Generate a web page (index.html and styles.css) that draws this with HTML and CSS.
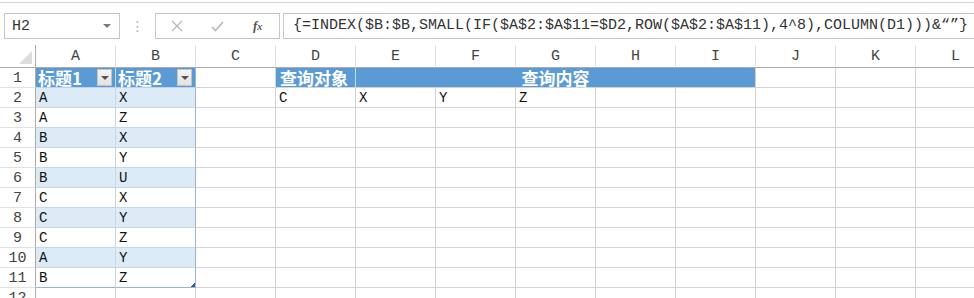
FILE: index.html
```html
<!DOCTYPE html>
<html lang="zh">
<head>
<meta charset="utf-8">
<title>Sheet</title>
<link rel="stylesheet" href="styles.css">
</head>
<body>
<div class="topline"></div>
<div class="bar">
  <div class="namebox"><span class="ref">H2</span><span class="dd"></span></div>
  <div class="grip">⋮</div>
  <div class="btns">
    <svg class="ic" width="12" height="12" viewBox="0 0 12 12"><path d="M1 1L11 11M11 1L1 11" stroke="#b8b8b8" stroke-width="1.3" fill="none"/></svg>
    <svg class="ic" width="13" height="11" viewBox="0 0 13 11"><path d="M1 6L4.5 9.5L12 1" stroke="#b8b8b8" stroke-width="1.6" fill="none"/></svg>
    <span class="fx">f<small>x</small></span>
  </div>
  <div class="formula">{=INDEX($B:$B,SMALL(IF($A$2:$A$11=$D2,ROW($A$2:$A$11),4^8),COLUMN(D1)))&amp;“”}</div>
</div>
<div class="sheet">
  <div class="corner"><span class="tri"></span></div>
  <div class="h">A</div><div class="h">B</div><div class="h">C</div><div class="h">D</div><div class="h">E</div><div class="h">F</div><div class="h">G</div><div class="h">H</div><div class="h">I</div><div class="h">J</div><div class="h">K</div><div class="h">L</div>

  <div class="n">1</div><div class="c th"><span class="lbl">标题1</span><span class="fb"></span></div><div class="c th tr"><span class="lbl">标题2</span><span class="fb"></span></div><div class="c"></div><div class="c hd hdD">查询对象</div><div class="c hd merge">查询内容</div><div class="c"></div><div class="c"></div><div class="c"></div>

  <div class="n">2</div><div class="c t b">A</div><div class="c t b tr">X</div><div class="c"></div><div class="c">C</div><div class="c">X</div><div class="c">Y</div><div class="c">Z</div><div class="c"></div><div class="c"></div><div class="c"></div><div class="c"></div><div class="c"></div>

  <div class="n">3</div><div class="c t">A</div><div class="c t tr">Z</div><div class="c"></div><div class="c"></div><div class="c"></div><div class="c"></div><div class="c"></div><div class="c"></div><div class="c"></div><div class="c"></div><div class="c"></div><div class="c"></div>

  <div class="n">4</div><div class="c t b">B</div><div class="c t b tr">X</div><div class="c"></div><div class="c"></div><div class="c"></div><div class="c"></div><div class="c"></div><div class="c"></div><div class="c"></div><div class="c"></div><div class="c"></div><div class="c"></div>

  <div class="n">5</div><div class="c t">B</div><div class="c t tr">Y</div><div class="c"></div><div class="c"></div><div class="c"></div><div class="c"></div><div class="c"></div><div class="c"></div><div class="c"></div><div class="c"></div><div class="c"></div><div class="c"></div>

  <div class="n">6</div><div class="c t b">B</div><div class="c t b tr">U</div><div class="c"></div><div class="c"></div><div class="c"></div><div class="c"></div><div class="c"></div><div class="c"></div><div class="c"></div><div class="c"></div><div class="c"></div><div class="c"></div>

  <div class="n">7</div><div class="c t">C</div><div class="c t tr">X</div><div class="c"></div><div class="c"></div><div class="c"></div><div class="c"></div><div class="c"></div><div class="c"></div><div class="c"></div><div class="c"></div><div class="c"></div><div class="c"></div>

  <div class="n">8</div><div class="c t b">C</div><div class="c t b tr">Y</div><div class="c"></div><div class="c"></div><div class="c"></div><div class="c"></div><div class="c"></div><div class="c"></div><div class="c"></div><div class="c"></div><div class="c"></div><div class="c"></div>

  <div class="n">9</div><div class="c t">C</div><div class="c t tr">Z</div><div class="c"></div><div class="c"></div><div class="c"></div><div class="c"></div><div class="c"></div><div class="c"></div><div class="c"></div><div class="c"></div><div class="c"></div><div class="c"></div>

  <div class="n">10</div><div class="c t b">A</div><div class="c t b tr">Y</div><div class="c"></div><div class="c"></div><div class="c"></div><div class="c"></div><div class="c"></div><div class="c"></div><div class="c"></div><div class="c"></div><div class="c"></div><div class="c"></div>

  <div class="n">11</div><div class="c t tl">B</div><div class="c t tr tl corner-handle">Z</div><div class="c"></div><div class="c"></div><div class="c"></div><div class="c"></div><div class="c"></div><div class="c"></div><div class="c"></div><div class="c"></div><div class="c"></div><div class="c"></div>

  <div class="n">12</div><div class="c"></div><div class="c"></div><div class="c"></div><div class="c"></div><div class="c"></div><div class="c"></div><div class="c"></div><div class="c"></div><div class="c"></div><div class="c"></div><div class="c"></div><div class="c"></div>
</div>
</body>
</html>
```
FILE: styles.css
```css
html, body {
  margin: 0;
  padding: 0;
  background: #fff;
  overflow: hidden;
}
body {
  width: 974px;
  height: 298px;
  font-family: "Liberation Mono", "Noto Sans CJK SC", monospace;
  color: #222;
}
.topline {
  height: 2px;
  border-bottom: 1px solid #d6d6d6;
}
.bar {
  display: flex;
  align-items: center;
  height: 26px;
  padding: 10px 0 0 4px;
}
.namebox {
  box-sizing: border-box;
  width: 116px;
  height: 26px;
  border: 1px solid #c6c6c6;
  display: flex;
  align-items: center;
  justify-content: space-between;
  padding: 0 8px 0 7px;
  font-size: 15px;
  color: #333;
}
.dd {
  width: 0;
  height: 0;
  border-left: 4px solid transparent;
  border-right: 4px solid transparent;
  border-top: 4px solid #7a7a7a;
}
.grip {
  width: 35px;
  text-align: center;
  color: #b0b0b0;
  font-family: "DejaVu Sans", sans-serif;
  font-size: 14px;
}
.btns {
  box-sizing: border-box;
  width: 125px;
  height: 26px;
  border: 1px solid #c6c6c6;
  display: flex;
  align-items: center;
  padding: 0 0 0 15px;
}
.btns .ic:first-child { margin-right: 28px; }
.btns .ic:nth-child(2) { margin-right: 29px; }
.fx {
  font-family: "Liberation Serif", serif;
  font-style: italic;
  font-weight: bold;
  font-size: 13px;
  color: #555;
}
.fx small { font-size: 10px; }
.formula {
  box-sizing: border-box;
  flex: 1;
  height: 26px;
  margin-left: 3px;
  margin-right: -2px;
  border: 1px solid #c6c6c6;
  padding-left: 9px;
  font-size: 15px;
  line-height: 24px;
  color: #333;
  white-space: nowrap;
  overflow: hidden;
}
.sheet {
  margin-top: 6px;
  display: grid;
  grid-template-columns: 36px repeat(12, 80px);
  grid-template-rows: 23px repeat(12, 20px);
  width: 996px;
}
.sheet > div {
  box-sizing: border-box;
  white-space: nowrap;
  overflow: hidden;
}
.corner {
  border-right: 1px solid #ababab;
  border-bottom: 1px solid #ababab;
  display: flex;
  justify-content: flex-end;
  align-items: flex-end;
  padding: 0 3px 3px 0;
}
.tri {
  width: 0;
  height: 0;
  border-left: 13px solid transparent;
  border-bottom: 13px solid #dcdcdc;
}
.h {
  border-right: 1px solid #e1e1e1;
  border-bottom: 1px solid #ababab;
  text-align: center;
  font-size: 15px;
  line-height: 24px;
  color: #444;
}
.n {
  border-right: 1px solid #ababab;
  border-bottom: 1px solid #e1e1e1;
  text-align: center;
  font-size: 15px;
  line-height: 21px;
  color: #444;
}
.c {
  border-right: 1px solid #d4d4d4;
  border-bottom: 1px solid #d4d4d4;
  font-size: 14px;
  line-height: 21px;
  padding-left: 3px;
  color: #111;
}
.t { border-bottom-color: #c5d6e7; border-right-color: #c9d6e3; }
.b { background: #ddebf7; }
.tr { border-right-color: #9cb5cf; }
.tl { border-bottom-color: #9cb5cf; }
.sheet > .th, .sheet > .hd { overflow: visible; }
.th {
  background: #5b9bd5;
  color: #fff;
  font-family: "Noto Sans CJK SC", sans-serif;
  font-weight: bold;
  font-size: 17px;
  line-height: 19px;
  padding-left: 2px;
  display: flex;
  align-items: center;
  justify-content: space-between;
  padding-right: 3px;
  border-right-color: #c9d6e3;
  border-bottom-color: #bed3ea;
}
.th.tr { border-right-color: #9cb5cf; }
.lbl { line-height: 19px; }
.fb {
  box-sizing: border-box;
  width: 15px;
  height: 17px;
  background: linear-gradient(#f4f4f4, #e2e2e2);
  border: 1px solid #c4c4c4;
  display: flex;
  justify-content: center;
  align-items: center;
}
.fb::after {
  content: "";
  width: 0;
  height: 0;
  border-left: 4px solid transparent;
  border-right: 4px solid transparent;
  border-top: 4px solid #555;
}
.hd {
  background: #5b9bd5;
  color: #fff;
  font-family: "Noto Sans CJK SC", sans-serif;
  font-weight: bold;
  font-size: 17px;
  line-height: 19px;
  padding-left: 4px;
}
.hdD { border-right-color: #c9ddf0; }
.merge {
  grid-column: span 5;
  text-align: center;
  padding-left: 0;
}
.corner-handle {
  background: linear-gradient(135deg, transparent 50%, #3b5aa0 50%) no-repeat right bottom / 4px 4px;
}
```
